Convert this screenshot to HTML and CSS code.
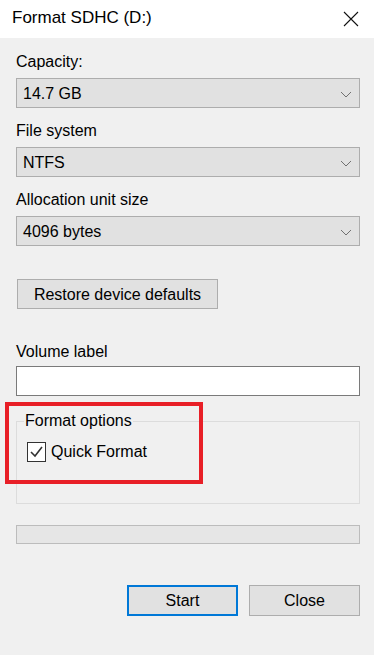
FILE: index.html
```html
<!DOCTYPE html>
<html lang="en">
<head>
    <meta charset="UTF-8">
    <title>Format SDHC (D:)</title>
    <link rel="stylesheet" href="styles.css">
</head>
<body>
    <div class="window">
        <div class="titlebar">
            <span class="title">Format SDHC (D:)</span>
            <svg class="close-icon" width="16" height="16" viewBox="0 0 16 16">
                <path d="M1 1 L15 15 M15 1 L1 15" stroke="#111" stroke-width="1.1" fill="none"/>
            </svg>
        </div>

        <div class="content">
            <div class="field">
                <label>Capacity:</label>
                <div class="select">
                    <span>14.7 GB</span>
                    <svg class="chevron" width="12" height="7" viewBox="0 0 12 7"><path d="M1 1 L6 6 L11 1" stroke="#707070" fill="none"/></svg>
                </div>
            </div>
            <div class="field">
                <label>File system</label>
                <div class="select">
                    <span>NTFS</span>
                    <svg class="chevron" width="12" height="7" viewBox="0 0 12 7"><path d="M1 1 L6 6 L11 1" stroke="#707070" fill="none"/></svg>
                </div>
            </div>
            <div class="field">
                <label>Allocation unit size</label>
                <div class="select">
                    <span>4096 bytes</span>
                    <svg class="chevron" width="12" height="7" viewBox="0 0 12 7"><path d="M1 1 L6 6 L11 1" stroke="#707070" fill="none"/></svg>
                </div>
            </div>

            <button class="btn restore-btn">Restore device defaults</button>

            <div class="field volume">
                <label>Volume label</label>
                <div class="text-input"></div>
            </div>

            <div class="options-wrap">
                <fieldset class="options">
                    <legend>Format options</legend>
                    <div class="check-row">
                        <span class="checkbox">
                            <svg width="17" height="18" viewBox="0 0 17 18"><path d="M3 9 L7 13 L14 4" stroke="#333" stroke-width="1.6" fill="none"/></svg>
                        </span>
                        <span>Quick Format</span>
                    </div>
                </fieldset>
                <div class="highlight"></div>
            </div>

            <div class="progress"></div>

            <div class="actions">
                <button class="btn primary">Start</button>
                <button class="btn">Close</button>
            </div>
        </div>
    </div>
</body>
</html>
```

FILE: styles.css
```css
* {
    margin: 0;
    padding: 0;
    box-sizing: border-box;
}

body {
    font-family: 'Liberation Sans', Arial, sans-serif;
    font-size: 16px;
    color: #000;
    background: #f0f0f0;
}

.window {
    width: 374px;
    height: 655px;
    background: #f0f0f0;
}

.titlebar {
    height: 38px;
    background: #fff;
    display: flex;
    align-items: center;
    justify-content: space-between;
    padding: 0 15px 2px 12px;
}

.title {
    font-size: 17px;
}

.close-icon {
    margin-top: 1px;
}

.content {
    padding: 14px 14px 0 16px;
}

.field {
    display: flex;
    flex-direction: column;
    gap: 6px;
    margin-bottom: 13px;
}

label {
    line-height: 20px;
}

.select {
    height: 30px;
    background: #e1e1e1;
    border: 1px solid #adadad;
    display: flex;
    align-items: center;
    justify-content: space-between;
    padding: 2px 7px 0 6px;
}

.btn {
    font-family: inherit;
    font-size: 16px;
    color: #000;
    background: #e1e1e1;
    border: 1px solid #adadad;
    height: 31px;
    padding-top: 1px;
    cursor: pointer;
}

.restore-btn {
    width: 201px;
    height: 30px;
    padding-top: 2px;
    margin: 20px 0 0 1px;
}

.volume {
    margin-top: 33px;
    gap: 4px;
    margin-bottom: 0;
}

.text-input {
    height: 30px;
    background: #fff;
    border: 1px solid #7a7a7a;
}

.options-wrap {
    position: relative;
    margin-top: 15px;
}

.options {
    border: 1px solid #dcdcdc;
    height: 93px;
    padding: 11px 0 0 10px;
}

.options legend {
    line-height: 20px;
    padding: 0 1px;
    margin-left: -3px;
}

.check-row {
    display: flex;
    align-items: center;
    gap: 5px;
    line-height: 20px;
}

.checkbox {
    width: 19px;
    height: 20px;
    border: 1px solid #333;
    background: #fff;
    display: flex;
    align-items: center;
    justify-content: center;
}

.highlight {
    position: absolute;
    left: -11px;
    top: -9px;
    width: 198px;
    height: 82px;
    border: 4px solid #e81f27;
    pointer-events: none;
}

.progress {
    margin-top: 21px;
    height: 19px;
    background: #e6e6e6;
    border: 1px solid #bcbcbc;
}

.actions {
    display: flex;
    justify-content: flex-end;
    gap: 11px;
    margin-top: 41px;
}

.actions .btn {
    width: 111px;
}

.btn.primary {
    border: 2px solid #0078d7;
}
```
